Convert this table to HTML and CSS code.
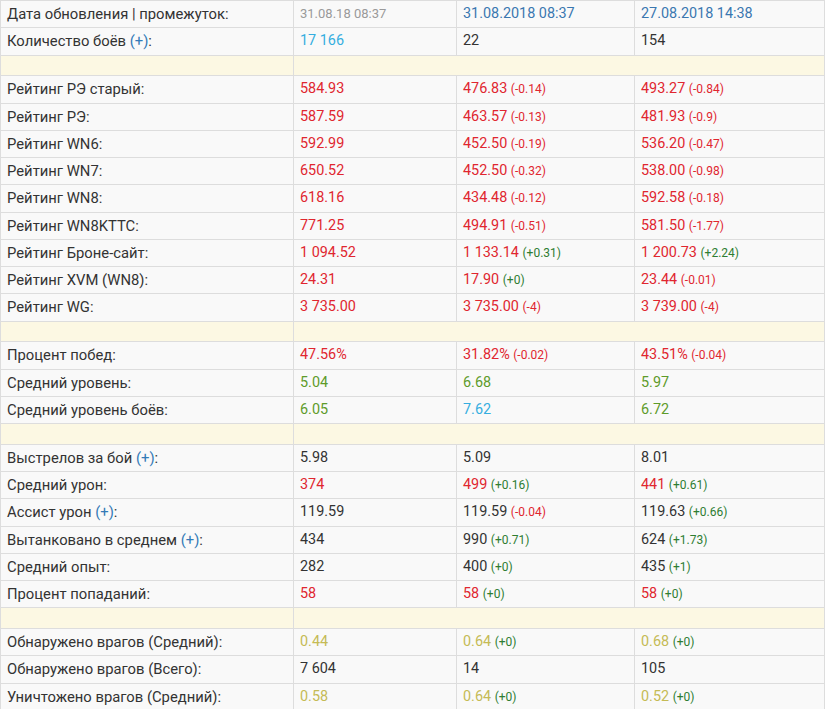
FILE: index.html
```html
<!DOCTYPE html>
<html lang="ru">
<head>
<meta charset="utf-8">
<link rel="stylesheet" href="styles.css">
</head>
<body>
<table class="stats">
  <colgroup>
    <col class="c1"><col class="c2"><col class="c3"><col class="c4">
  </colgroup>
  <tbody>
    <tr><td class="lbl">Дата обновления | промежуток:</td><td class="date-gray">31.08.18 08:37</td><td class="date">31.08.2018 08:37</td><td class="date">27.08.2018 14:38</td></tr>
    <tr><td class="lbl">Количество боёв <a class="plus">(+)</a>:</td><td class="cyan">17 166</td><td>22</td><td>154</td></tr>
    <tr class="sep"><td></td><td colspan="3"></td></tr>

    <tr><td class="lbl">Рейтинг РЭ старый:</td><td class="red">584.93</td><td><span class="red">476.83</span> <span class="dn">(-0.14)</span></td><td><span class="red">493.27</span> <span class="dn">(-0.84)</span></td></tr>
    <tr><td class="lbl">Рейтинг РЭ:</td><td class="red">587.59</td><td><span class="red">463.57</span> <span class="dn">(-0.13)</span></td><td><span class="red">481.93</span> <span class="dn">(-0.9)</span></td></tr>
    <tr><td class="lbl">Рейтинг WN6:</td><td class="red">592.99</td><td><span class="red">452.50</span> <span class="dn">(-0.19)</span></td><td><span class="red">536.20</span> <span class="dn">(-0.47)</span></td></tr>
    <tr><td class="lbl">Рейтинг WN7:</td><td class="red">650.52</td><td><span class="red">452.50</span> <span class="dn">(-0.32)</span></td><td><span class="red">538.00</span> <span class="dn">(-0.98)</span></td></tr>
    <tr><td class="lbl">Рейтинг WN8:</td><td class="red">618.16</td><td><span class="red">434.48</span> <span class="dn">(-0.12)</span></td><td><span class="red">592.58</span> <span class="dn">(-0.18)</span></td></tr>
    <tr><td class="lbl">Рейтинг WN8KTTC:</td><td class="red">771.25</td><td><span class="red">494.91</span> <span class="dn">(-0.51)</span></td><td><span class="red">581.50</span> <span class="dn">(-1.77)</span></td></tr>
    <tr><td class="lbl">Рейтинг Броне-сайт:</td><td class="red">1 094.52</td><td><span class="red">1 133.14</span> <span class="up">(+0.31)</span></td><td><span class="red">1 200.73</span> <span class="up">(+2.24)</span></td></tr>
    <tr><td class="lbl">Рейтинг XVM (WN8):</td><td class="red">24.31</td><td><span class="red">17.90</span> <span class="up">(+0)</span></td><td><span class="red">23.44</span> <span class="dn">(-0.01)</span></td></tr>
    <tr><td class="lbl">Рейтинг WG:</td><td class="red">3 735.00</td><td><span class="red">3 735.00</span> <span class="dn">(-4)</span></td><td><span class="red">3 739.00</span> <span class="dn">(-4)</span></td></tr>
    <tr class="sep"><td></td><td colspan="3"></td></tr>

    <tr><td class="lbl">Процент побед:</td><td class="red">47.56%</td><td><span class="red">31.82%</span> <span class="dn">(-0.02)</span></td><td><span class="red">43.51%</span> <span class="dn">(-0.04)</span></td></tr>
    <tr><td class="lbl">Средний уровень:</td><td class="green">5.04</td><td class="green">6.68</td><td class="green">5.97</td></tr>
    <tr><td class="lbl">Средний уровень боёв:</td><td class="green">6.05</td><td class="cyan">7.62</td><td class="green">6.72</td></tr>
    <tr class="sep"><td></td><td colspan="3"></td></tr>

    <tr><td class="lbl">Выстрелов за бой <a class="plus">(+)</a>:</td><td>5.98</td><td>5.09</td><td>8.01</td></tr>
    <tr><td class="lbl">Средний урон:</td><td class="red">374</td><td><span class="red">499</span> <span class="up">(+0.16)</span></td><td><span class="red">441</span> <span class="up">(+0.61)</span></td></tr>
    <tr><td class="lbl">Ассист урон <a class="plus">(+)</a>:</td><td>119.59</td><td>119.59 <span class="dn">(-0.04)</span></td><td>119.63 <span class="up">(+0.66)</span></td></tr>
    <tr><td class="lbl">Вытанковано в среднем <a class="plus">(+)</a>:</td><td>434</td><td>990 <span class="up">(+0.71)</span></td><td>624 <span class="up">(+1.73)</span></td></tr>
    <tr><td class="lbl">Средний опыт:</td><td>282</td><td>400 <span class="up">(+0)</span></td><td>435 <span class="up">(+1)</span></td></tr>
    <tr><td class="lbl">Процент попаданий:</td><td class="red">58</td><td><span class="red">58</span> <span class="up">(+0)</span></td><td><span class="red">58</span> <span class="up">(+0)</span></td></tr>
    <tr class="sep"><td></td><td colspan="3"></td></tr>

    <tr><td class="lbl">Обнаружено врагов (Средний):</td><td class="olive">0.44</td><td><span class="olive">0.64</span> <span class="up">(+0)</span></td><td><span class="olive">0.68</span> <span class="up">(+0)</span></td></tr>
    <tr><td class="lbl">Обнаружено врагов (Всего):</td><td>7 604</td><td>14</td><td>105</td></tr>
    <tr><td class="lbl">Уничтожено врагов (Средний):</td><td class="olive">0.58</td><td><span class="olive">0.64</span> <span class="up">(+0)</span></td><td><span class="olive">0.52</span> <span class="up">(+0)</span></td></tr>
  </tbody>
</table>
</body>
</html>
```

FILE: styles.css
```css
html, body {
  margin: 0;
  padding: 0;
  background: #ffffff;
}

body {
  font-family: Roboto, "Liberation Sans", Arial, sans-serif;
  font-size: 14.4px;
  color: #333333;
}

.stats {
  border-collapse: collapse;
  width: 824px;
  table-layout: fixed;
}

.c1 { width: 293px; }
.c2 { width: 163px; }
.c3 { width: 178px; }
.c4 { width: 190px; }

.stats td {
  border: 1px solid #dddddd;
  background: #f9f9f9;
  padding: 4px 6px;
  line-height: 18.25px;
  white-space: nowrap;
  vertical-align: middle;
}

.stats td.lbl {
  font-size: 14.8px;
}

.stats tr.sep td {
  background: #fcf8e3;
  padding: 0;
  height: 19.8px;
  line-height: 19.8px;
}

.plus {
  color: #337ab7;
  text-decoration: none;
}

.date-gray {
  color: #9a9a9a;
  font-size: 13px;
}

.date {
  color: #3a77b0;
}

.red { color: #e0262f; }
.cyan { color: #35aee0; }
.green { color: #5e9b2a; }
.olive { color: #c5bb55; }

.dn {
  color: #e0262f;
  font-size: 12px;
}

.up {
  color: #2e7d32;
  font-size: 12px;
}
```
